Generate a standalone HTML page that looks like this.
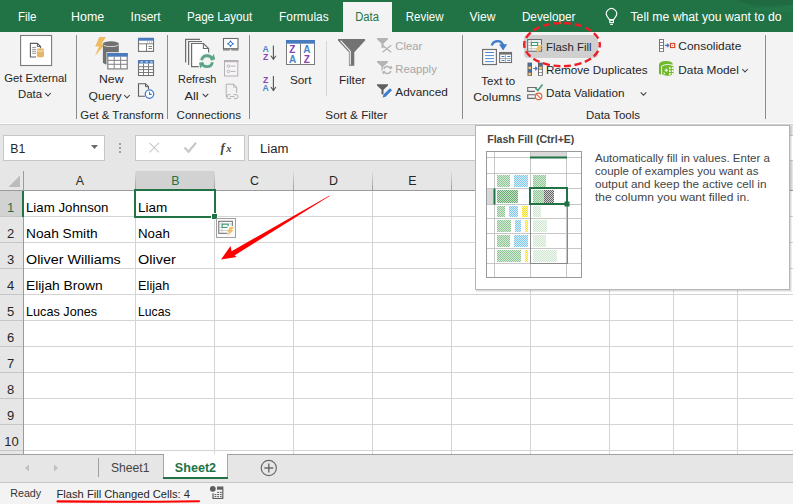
<!DOCTYPE html>
<html><head><meta charset="utf-8"><style>
html,body{margin:0;padding:0;width:793px;height:504px;overflow:hidden;background:#fff}
svg{display:block;font-family:"Liberation Sans", sans-serif}
</style></head><body>
<svg width="793" height="504" viewBox="0 0 793 504">
<rect x="0" y="0" width="793" height="504" fill="#ffffff" />
<rect x="0" y="0" width="793" height="32" fill="#217346" />
<path d="M738,0 C745,6 765,7 793,4 L793,0 Z" fill="#1f6a40" stroke="none" stroke-width="1" />
<path d="M744,7.5 C765,8.5 780,7 793,5 L793,13 C780,12 760,12 744,7.5 Z" fill="#257a4b" stroke="none" stroke-width="1" opacity="0.6"/>
<rect x="343" y="2" width="49" height="30" fill="#f3f3f3" />
<rect x="0" y="32" width="793" height="91" fill="#f3f3f3" />
<rect x="0" y="124" width="793" height="1" fill="#cfcfcf" />
<rect x="0" y="125" width="793" height="65" fill="#e6e6e6" />
<text x="17.9" y="21" font-size="12.3" fill="#ffffff" font-weight="normal" textLength="18.6" lengthAdjust="spacingAndGlyphs" >File</text>
<text x="71.1" y="21" font-size="12.3" fill="#ffffff" font-weight="normal" textLength="33.2" lengthAdjust="spacingAndGlyphs" >Home</text>
<text x="130.6" y="21" font-size="12.3" fill="#ffffff" font-weight="normal" textLength="30.1" lengthAdjust="spacingAndGlyphs" >Insert</text>
<text x="186.9" y="21" font-size="12.3" fill="#ffffff" font-weight="normal" textLength="65.4" lengthAdjust="spacingAndGlyphs" >Page Layout</text>
<text x="279.0" y="21" font-size="12.3" fill="#ffffff" font-weight="normal" textLength="49.6" lengthAdjust="spacingAndGlyphs" >Formulas</text>
<text x="405.8" y="21" font-size="12.3" fill="#ffffff" font-weight="normal" textLength="37.7" lengthAdjust="spacingAndGlyphs" >Review</text>
<text x="469.5" y="21" font-size="12.3" fill="#ffffff" font-weight="normal" textLength="25.9" lengthAdjust="spacingAndGlyphs" >View</text>
<text x="521.9" y="21" font-size="12.3" fill="#ffffff" font-weight="normal" textLength="53.5" lengthAdjust="spacingAndGlyphs" >Developer</text>
<text x="630.5" y="21" font-size="12.3" fill="#ffffff" font-weight="normal" textLength="151" lengthAdjust="spacingAndGlyphs" >Tell me what you want to do</text>
<text x="355.2" y="21" font-size="12.3" fill="#217346" font-weight="normal" textLength="23.7" lengthAdjust="spacingAndGlyphs" >Data</text>
<path d="M609.4,19.6 L607.3,16.6 A5.1,5.1 0 1 1 615.7,16.6 L613.6,19.6 Z" fill="none" stroke="#ffffff" stroke-width="1.1" />
<rect x="609.8" y="20.3" width="3.6" height="2.3" fill="none" stroke="#ffffff" stroke-width="1.1"/>
<line x1="610.2" y1="24.4" x2="612.9" y2="24.4" stroke="#ffffff" stroke-width="1.1" />
<line x1="76.5" y1="35" x2="76.5" y2="119" stroke="#8c8c8c" stroke-width="1" />
<line x1="167.5" y1="35" x2="167.5" y2="119" stroke="#8c8c8c" stroke-width="1" />
<line x1="249.5" y1="35" x2="249.5" y2="119" stroke="#8c8c8c" stroke-width="1" />
<line x1="462.5" y1="35" x2="462.5" y2="119" stroke="#8c8c8c" stroke-width="1" />
<line x1="765.5" y1="35" x2="765.5" y2="119" stroke="#8c8c8c" stroke-width="1" />
<line x1="326.5" y1="41" x2="326.5" y2="96" stroke="#d4d4d4" stroke-width="1" />
<rect x="20.6" y="35.5" width="31" height="30" fill="#ffffff" stroke="#7a7a7a" stroke-width="1.1"/>
<path d="M36,57 H30.4 V43.4 H37.4 L40.6,46.6 V48.2" fill="#ffffff" stroke="#5f5f5f" stroke-width="1.1" />
<path d="M37.4,43.4 V46.6 H40.6" fill="none" stroke="#5f5f5f" stroke-width="1" />
<line x1="32.1" y1="47.4" x2="36.1" y2="47.4" stroke="#8a8a8a" stroke-width="0.9" />
<line x1="32.1" y1="49.4" x2="36.1" y2="49.4" stroke="#8a8a8a" stroke-width="0.9" />
<line x1="32.1" y1="51.3" x2="36.1" y2="51.3" stroke="#8a8a8a" stroke-width="0.9" />
<line x1="32.1" y1="53.3" x2="36.1" y2="53.3" stroke="#8a8a8a" stroke-width="0.9" />
<path d="M36.9,49.6 A3.55,1.4 0 0 1 44,49.6 V56 A3.55,1.4 0 0 1 36.9,56 Z" fill="#e3b76a" stroke="none" stroke-width="1" />
<path d="M37.2,50.3 A3.3,1.2 0 0 0 43.7,50.3" fill="none" stroke="#ffffff" stroke-width="0.7" />
<text x="4.2" y="81.9" font-size="11.6" fill="#262626" font-weight="normal" textLength="62.5" lengthAdjust="spacingAndGlyphs" >Get External</text>
<text x="18" y="97.5" font-size="11.6" fill="#262626" font-weight="normal" textLength="24" lengthAdjust="spacingAndGlyphs" >Data</text>
<path d="M45.2,93.0 L48,95.9 L50.8,93.0" fill="none" stroke="#444" stroke-width="1.05" />
<path d="M99.2,37 L106,37 L101.3,44.3 L105,44.3 L95,56 L99,46.6 L95.2,46.6 Z" fill="#eebc5f" stroke="none" stroke-width="1" />
<path d="M102.9,43.8 A7.95,2.6 0 0 1 118.8,43.8 V62.3 A7.95,2.6 0 0 1 102.9,62.3 Z" fill="#707070" stroke="none" stroke-width="1" />
<path d="M103.2,44.6 A7.7,2.2 0 0 0 118.5,44.6" fill="none" stroke="#f3f3f3" stroke-width="0.8" />
<rect x="106.5" y="52.2" width="22" height="18" fill="#f3f3f3" />
<rect x="107.8" y="53.6" width="19.4" height="15.3" fill="#ffffff" stroke="#777777" stroke-width="1.1"/>
<rect x="107.3" y="53.1" width="20.4" height="3.6" fill="#4a7bbf" />
<line x1="114.2" y1="56.7" x2="114.2" y2="68.8" stroke="#8a8a8a" stroke-width="1.1" />
<line x1="120.6" y1="56.7" x2="120.6" y2="68.8" stroke="#8a8a8a" stroke-width="1.1" />
<line x1="108" y1="60.4" x2="127" y2="60.4" stroke="#8a8a8a" stroke-width="1.1" />
<line x1="108" y1="64.3" x2="127" y2="64.3" stroke="#8a8a8a" stroke-width="1.1" />
<text x="99" y="83.3" font-size="11.6" fill="#262626" font-weight="normal" textLength="24.5" lengthAdjust="spacingAndGlyphs" >New</text>
<text x="88.5" y="99.7" font-size="11.6" fill="#262626" font-weight="normal" textLength="33" lengthAdjust="spacingAndGlyphs" >Query</text>
<path d="M124.2,95.0 L127,97.9 L129.8,95.0" fill="none" stroke="#444" stroke-width="1.05" />
<rect x="138.5" y="38.4" width="15" height="13" fill="#ffffff" stroke="#707070" stroke-width="1.1"/>
<rect x="138" y="37.9" width="16" height="2.8" fill="#4a7bbf" />
<line x1="138.5" y1="43.8" x2="153.5" y2="43.8" stroke="#707070" stroke-width="0.9" />
<rect x="147" y="41.5" width="1" height="1" fill="#9a9a9a" />
<rect x="149" y="41.5" width="1" height="1" fill="#9a9a9a" />
<rect x="151" y="41.5" width="1" height="1" fill="#9a9a9a" />
<line x1="146.5" y1="43.8" x2="146.5" y2="51.5" stroke="#707070" stroke-width="0.9" />
<line x1="148.5" y1="46.5" x2="152" y2="46.5" stroke="#707070" stroke-width="0.9" />
<line x1="148.5" y1="48.5" x2="152" y2="48.5" stroke="#707070" stroke-width="0.9" />
<rect x="138.5" y="60.7" width="15" height="14.8" fill="#ffffff" stroke="#707070" stroke-width="1.1"/>
<rect x="138" y="60.2" width="16" height="3.3" fill="#4a7bbf" />
<rect x="140.5" y="61.5" width="2.5" height="0.9" fill="#ffffff" />
<rect x="145.3" y="61.5" width="2.5" height="0.9" fill="#ffffff" />
<rect x="150.1" y="61.5" width="2.5" height="0.9" fill="#ffffff" />
<line x1="143.5" y1="63.5" x2="143.5" y2="75.5" stroke="#707070" stroke-width="0.9" />
<line x1="148.5" y1="63.5" x2="148.5" y2="75.5" stroke="#707070" stroke-width="0.9" />
<line x1="139" y1="66.7" x2="153.5" y2="66.7" stroke="#707070" stroke-width="0.9" />
<line x1="139" y1="69.6" x2="153.5" y2="69.6" stroke="#707070" stroke-width="0.9" />
<line x1="139" y1="72.5" x2="153.5" y2="72.5" stroke="#707070" stroke-width="0.9" />
<path d="M145,96.3 H138.5 V83.7 H145.5 L148.5,86.7 V89" fill="none" stroke="#5f5f5f" stroke-width="1.1" />
<path d="M145.5,83.7 V86.7 H148.5" fill="none" stroke="#5f5f5f" stroke-width="1" />
<circle cx="149.5" cy="94.1" r="4.2" fill="#ffffff" stroke="#3e7fd0" stroke-width="1.3"/>
<path d="M149.5,91.8 V94.4 H151.8" fill="none" stroke="#3e7fd0" stroke-width="1.1" />
<text x="80.3" y="118.5" font-size="11.6" fill="#262626" font-weight="normal" textLength="83.5" lengthAdjust="spacingAndGlyphs" >Get &amp; Transform</text>
<path d="M185.6,62.6 V39.4 H200" fill="none" stroke="#6d6d6d" stroke-width="1.2" />
<path d="M188.6,65 V41.5 H202" fill="none" stroke="#6d6d6d" stroke-width="1.2" />
<path d="M191.6,66.6 V43.5 H203.4 L208.6,48.5 V60 H199 V66.6 Z" fill="#ffffff" stroke="none" stroke-width="1" />
<path d="M198.8,66.6 H191.6 V43.5 H203.4 L208.6,48.6 V52.5" fill="none" stroke="#6d6d6d" stroke-width="1.2" />
<path d="M203.4,43.5 V48.5 H208.6" fill="none" stroke="#6d6d6d" stroke-width="1.1" />
<circle cx="207" cy="61.2" r="8.3" fill="#f3f3f3"/>
<path d="M201.6,60.2 A5.5,5.5 0 0 1 212.4,60.2" fill="none" stroke="#5da587" stroke-width="2.8" />
<path d="M210,59.6 L215.2,59.6 L213.8,54 Z" fill="#5da587" stroke="none" stroke-width="1" />
<path d="M212.4,62.2 A5.5,5.5 0 0 1 201.6,62.2" fill="none" stroke="#5da587" stroke-width="2.8" />
<path d="M199,62.8 L204.2,62.8 L200.2,68.5 Z" fill="#5da587" stroke="none" stroke-width="1" />
<text x="178" y="83.4" font-size="11.6" fill="#262626" font-weight="normal" textLength="38.5" lengthAdjust="spacingAndGlyphs" >Refresh</text>
<text x="184.4" y="99.7" font-size="11.6" fill="#262626" font-weight="normal" textLength="14.2" lengthAdjust="spacingAndGlyphs" >All</text>
<path d="M202.7,93.8 L205.5,96.7 L208.3,93.8" fill="none" stroke="#444" stroke-width="1.05" />
<rect x="223.5" y="38.5" width="14.5" height="10.2" fill="#ffffff" stroke="#6a6a6a" stroke-width="1.1"/>
<line x1="223" y1="49.9" x2="229.8" y2="49.9" stroke="#6a6a6a" stroke-width="1.1" />
<line x1="231.2" y1="49.9" x2="238.5" y2="49.9" stroke="#6a6a6a" stroke-width="1.1" />
<circle cx="230.5" cy="41.400000000000006" r="0.9" fill="#2f6fc5"/>
<circle cx="232.8" cy="43.7" r="0.9" fill="#2f6fc5"/>
<circle cx="230.5" cy="46.0" r="0.9" fill="#2f6fc5"/>
<circle cx="228.2" cy="43.7" r="0.9" fill="#2f6fc5"/>
<path d="M230.5,41.4 L232.8,43.7 L230.5,46 L228.2,43.7 Z" fill="none" stroke="#2f6fc5" stroke-width="1" />
<rect x="224.5" y="60.5" width="13.3" height="15.5" fill="#f6f4f6" stroke="#b4b0b4" stroke-width="1"/>
<rect x="224" y="60" width="14.3" height="2.2" fill="#b4b0b4" />
<circle cx="228.4" cy="66.1" r="1.3" fill="none" stroke="#b4b0b4" stroke-width="0.9"/><circle cx="228.4" cy="71.4" r="1.3" fill="none" stroke="#b4b0b4" stroke-width="0.9"/>
<line x1="230.5" y1="66.1" x2="235.5" y2="66.1" stroke="#b4b0b4" stroke-width="1" />
<line x1="230.5" y1="71.4" x2="235.5" y2="71.4" stroke="#b4b0b4" stroke-width="1" />
<path d="M228,96.3 H226.2 V84.2 H233.7 L236.7,87.2 V93" fill="none" stroke="#b4b0b4" stroke-width="1" />
<path d="M233.7,84.2 V87.2 H236.7" fill="none" stroke="#b4b0b4" stroke-width="0.9" />
<path d="M230.5,94.6 H228.5 A2,2 0 0 0 228.5,98.6 H231 M233.5,94.6 H236 A2,2 0 0 1 236,98.6 H234 M229.8,96.6 H234.7" fill="none" stroke="#b4b0b4" stroke-width="1" />
<text x="176.5" y="118.7" font-size="11.6" fill="#262626" font-weight="normal" textLength="64.5" lengthAdjust="spacingAndGlyphs" >Connections</text>
<text x="262.6" y="51.8" font-size="8.6" fill="#4a86c8" font-weight="bold" font-family="Liberation Sans">A</text>
<text x="262.9" y="59.7" font-size="8.6" fill="#8a44ad" font-weight="bold" font-family="Liberation Sans">Z</text>
<path d="M273.4,45.5 V59 M270.9,55.8 L273.4,59.3 L275.9,55.8" fill="none" stroke="#555555" stroke-width="1.1" />
<text x="262.9" y="82.7" font-size="8.6" fill="#8a44ad" font-weight="bold" font-family="Liberation Sans">Z</text>
<text x="262.6" y="90.9" font-size="8.6" fill="#4a86c8" font-weight="bold" font-family="Liberation Sans">A</text>
<path d="M273.4,76 V90.2 M270.9,87 L273.4,90.5 L275.9,87" fill="none" stroke="#555555" stroke-width="1.1" />
<rect x="286.5" y="40.5" width="28" height="24" fill="#ffffff" stroke="#7a7a7a" stroke-width="1"/>
<rect x="286" y="40" width="29" height="3.7" fill="#4a7bbf" />
<line x1="300.5" y1="43.5" x2="300.5" y2="64.5" stroke="#7a7a7a" stroke-width="1" />
<text x="289.2" y="52.7" font-size="10" fill="#8a44ad" font-weight="bold" font-family="Liberation Sans">Z</text>
<text x="289" y="63.1" font-size="10" fill="#4a86c8" font-weight="bold" font-family="Liberation Sans">A</text>
<text x="303.3" y="52.7" font-size="10" fill="#4a86c8" font-weight="bold" font-family="Liberation Sans">A</text>
<text x="303.8" y="63.1" font-size="10" fill="#8a44ad" font-weight="bold" font-family="Liberation Sans">Z</text>
<text x="290" y="84" font-size="11.6" fill="#262626" font-weight="normal" textLength="21.5" lengthAdjust="spacingAndGlyphs" >Sort</text>
<path d="M338,39 H365.1 V40.5 L354.3,52.2 V65.7 H348.9 V52.2 L338,40.5 Z" fill="#737373" stroke="none" stroke-width="1" />
<path d="M340.6,40.7 L350.2,51.2 V64.8" fill="none" stroke="#ffffff" stroke-width="1.1" stroke-linejoin="miter"/>
<text x="339" y="84" font-size="11.6" fill="#262626" font-weight="normal" textLength="26.5" lengthAdjust="spacingAndGlyphs" >Filter</text>
<path d="M377,38 H388 V39.2 L383.5,43.5 V48 H381.5 V43.5 L377,39.2 Z" fill="#b3b3b3" stroke="none" stroke-width="1" />
<path d="M382.5,45.2 L391.2,52.2 M391.2,45.2 L382.5,52.2" fill="none" stroke="#b3b3b3" stroke-width="1.3" />
<path d="M377,61 H388 V62.2 L383.5,66.5 V71 H381.5 V66.5 L377,62.2 Z" fill="#b3b3b3" stroke="none" stroke-width="1" />
<circle cx="387.3" cy="70" r="5" fill="#f3f3f3"/>
<path d="M383.8,69.2 A3.6,3.6 0 0 1 390.8,69.2" fill="none" stroke="#b3b3b3" stroke-width="1.4" />
<path d="M389.2,68.6 L392.6,68.6 L391.4,65.5 Z" fill="#b3b3b3" stroke="none" stroke-width="1" />
<path d="M390.8,70.8 A3.6,3.6 0 0 1 383.8,70.8" fill="none" stroke="#b3b3b3" stroke-width="1.4" />
<path d="M382,71.4 L385.4,71.4 L383.2,74.5 Z" fill="#b3b3b3" stroke="none" stroke-width="1" />
<text x="395.3" y="49.8" font-size="11.6" fill="#a6a6a6" font-weight="normal" textLength="27" lengthAdjust="spacingAndGlyphs" >Clear</text>
<text x="395.3" y="73" font-size="11.6" fill="#a6a6a6" font-weight="normal" textLength="41.5" lengthAdjust="spacingAndGlyphs" >Reapply</text>
<path d="M377,84.2 H388 V85.4 L383.5,89.7 V94.2 H381.5 V89.7 L377,85.4 Z" fill="#5f5f5f" stroke="none" stroke-width="1" />
<path d="M382.6,97.6 L383.5,94.6 L390,88.3 L392,90.3 L385.6,96.7 Z" fill="#3b7ccf" stroke="none" stroke-width="1" />
<text x="395.3" y="95.6" font-size="11.6" fill="#262626" font-weight="normal" textLength="52.5" lengthAdjust="spacingAndGlyphs" >Advanced</text>
<text x="325.3" y="119" font-size="11.6" fill="#262626" font-weight="normal" textLength="62" lengthAdjust="spacingAndGlyphs" >Sort &amp; Filter</text>
<path d="M491.8,45.6 C493,40.5 501,39 503.2,45.5" fill="none" stroke="#3d7cc9" stroke-width="2.4" />
<path d="M499,44.2 L507.2,44.2 L503.1,50.4 Z" fill="#3d7cc9" stroke="none" stroke-width="1" />
<rect x="482.6" y="49.5" width="13.8" height="15" fill="#ffffff" stroke="#707070" stroke-width="1.2"/>
<line x1="485.1" y1="52.5" x2="494.1" y2="52.5" stroke="#3d7cc9" stroke-width="0.9" />
<line x1="485.1" y1="55.6" x2="494.1" y2="55.6" stroke="#3d7cc9" stroke-width="0.9" />
<line x1="485.1" y1="58.6" x2="494.1" y2="58.6" stroke="#3d7cc9" stroke-width="0.9" />
<line x1="485.1" y1="61.6" x2="494.1" y2="61.6" stroke="#3d7cc9" stroke-width="0.9" />
<rect x="499.6" y="52.5" width="11.9" height="10" fill="#ffffff" stroke="#707070" stroke-width="1.1"/>
<rect x="499.2" y="52" width="12.6" height="2.6" fill="#707070" />
<line x1="505.5" y1="54.5" x2="505.5" y2="62.5" stroke="#9a9a9a" stroke-width="0.8" />
<line x1="500" y1="58.5" x2="511.5" y2="58.5" stroke="#9a9a9a" stroke-width="0.8" />
<line x1="501.5" y1="56.5" x2="504.5" y2="56.5" stroke="#3d7cc9" stroke-width="1" />
<line x1="501.5" y1="60.4" x2="504.5" y2="60.4" stroke="#3d7cc9" stroke-width="1" />
<line x1="507.3" y1="56.5" x2="510.3" y2="56.5" stroke="#3d7cc9" stroke-width="1" />
<line x1="507.3" y1="60.4" x2="510.3" y2="60.4" stroke="#3d7cc9" stroke-width="1" />
<text x="481.3" y="84.6" font-size="11.6" fill="#262626" font-weight="normal" textLength="33.8" lengthAdjust="spacingAndGlyphs" >Text to</text>
<text x="473.2" y="100.7" font-size="11.6" fill="#262626" font-weight="normal" textLength="48" lengthAdjust="spacingAndGlyphs" >Columns</text>
<rect x="524" y="35" width="74" height="23" fill="#d0d0d0" rx="4"/>
<rect x="527.7" y="39.6" width="13.8" height="11.6" fill="#ffffff" stroke="#6a6a6a" stroke-width="1.1"/>
<line x1="528.3" y1="42.3" x2="541" y2="42.3" stroke="#bdbdbd" stroke-width="0.9" />
<line x1="528.3" y1="45.5" x2="541" y2="45.5" stroke="#bdbdbd" stroke-width="0.9" />
<line x1="528.3" y1="48.7" x2="541" y2="48.7" stroke="#bdbdbd" stroke-width="0.9" />
<line x1="531.2" y1="40" x2="531.2" y2="51" stroke="#bdbdbd" stroke-width="0.9" />
<rect x="531.4" y="42.5" width="6.2" height="3" fill="#ffffff" stroke="#3c9a73" stroke-width="1.1"/>
<path d="M538.5,45 L542.7,45 L540.2,48.3 L542.2,48.3 L536,53.9 L537.6,49.8 L535.6,49.8 Z" fill="#eec16a" stroke="none" stroke-width="1" />
<text x="546" y="50.7" font-size="11.6" fill="#262626" font-weight="normal" textLength="45.5" lengthAdjust="spacingAndGlyphs" >Flash Fill</text>
<rect x="527.5" y="62.6" width="4.5" height="13.2" fill="#5f5f5f" />
<rect x="528.4" y="63.4" width="2.7" height="2.4" fill="#3d73b8" />
<rect x="528.4" y="66.6" width="2.7" height="2.6" fill="#f2c27a" />
<rect x="528.4" y="69.7" width="2.7" height="2.4" fill="#3d73b8" />
<rect x="528.4" y="72.7" width="2.7" height="2.4" fill="#f2c27a" />
<rect x="538" y="62.6" width="4.8" height="13.2" fill="#5f5f5f" />
<rect x="538.9" y="63.4" width="3" height="2.4" fill="#3d73b8" />
<rect x="538.9" y="66.6" width="3" height="2.6" fill="#f2c27a" />
<rect x="538.9" y="69.7" width="3" height="2.4" fill="#ffffff" />
<rect x="538.9" y="72.7" width="3" height="2.4" fill="#ffffff" />
<path d="M533.2,68.5 H536.8 M535.2,66.8 L537,68.5 L535.2,70.2" fill="none" stroke="#3d7cc9" stroke-width="1.2" />
<text x="546" y="73.6" font-size="11.6" fill="#262626" font-weight="normal" textLength="101.5" lengthAdjust="spacingAndGlyphs" >Remove Duplicates</text>
<path d="M536.8,87.5 H527.7 V91.4 H535" fill="none" stroke="#6a6a6a" stroke-width="1.1" />
<path d="M535,94.7 H527.7 V98.4 H535" fill="none" stroke="#6a6a6a" stroke-width="1.1" />
<path d="M535.3,87.9 L537.9,90.5 L542.5,84.6" fill="none" stroke="#4a9e7e" stroke-width="1.7" />
<circle cx="538.6" cy="96.4" r="3.2" fill="#ffffff" stroke="#e0623d" stroke-width="1.2"/>
<line x1="536.4" y1="94.2" x2="540.8" y2="98.6" stroke="#e0623d" stroke-width="1.2" />
<text x="546" y="96.9" font-size="11.6" fill="#262626" font-weight="normal" textLength="78.5" lengthAdjust="spacingAndGlyphs" >Data Validation</text>
<path d="M640.7,92.3 L643.5,95.2 L646.3,92.3" fill="none" stroke="#444" stroke-width="1.05" />
<text x="586" y="119.2" font-size="11.6" fill="#262626" font-weight="normal" textLength="54" lengthAdjust="spacingAndGlyphs" >Data Tools</text>
<rect x="659" y="39.1" width="4.9" height="12.8" fill="#6a6a6a" />
<rect x="659.9" y="40" width="3.1" height="2.2" fill="#ffffff" />
<rect x="659.9" y="43" width="3.1" height="2.2" fill="#ffffff" />
<rect x="659.9" y="46" width="3.1" height="2.2" fill="#ffffff" />
<rect x="659.9" y="49" width="3.1" height="2.2" fill="#ffffff" />
<path d="M664.8,45.4 H668.6 M667,43.7 L668.8,45.4 L667,47.1" fill="none" stroke="#3d7cc9" stroke-width="1.2" />
<rect x="670.5" y="43.5" width="4.2" height="4" fill="#ffffff" stroke="#d9452b" stroke-width="1.2"/>
<rect x="672.2" y="45.1" width="0.9" height="0.9" fill="#d9452b" />
<text x="678.3" y="50.3" font-size="11.6" fill="#262626" font-weight="normal" textLength="63" lengthAdjust="spacingAndGlyphs" >Consolidate</text>
<path d="M659,73.8 V64.8 Q659,61 666,61 Q672.8,61 672.8,64.6 L661.6,66.2 V75 Z" fill="#70b92d" stroke="none" stroke-width="1" />
<path d="M661.6,66.2 Q667.5,62.6 674,66.2 V74.6 Q667.5,78 661.6,74.6 Z" fill="#70b92d" stroke="#f3f3f3" stroke-width="1" />
<rect x="669" y="67.3" width="1.6" height="1.8" fill="#ffffff" />
<rect x="669" y="70.2" width="1.6" height="1.8" fill="#ffffff" />
<rect x="669" y="73" width="1.6" height="1.8" fill="#ffffff" />
<rect x="671.8" y="67.3" width="1.6" height="1.8" fill="#ffffff" />
<rect x="671.8" y="70.2" width="1.6" height="1.8" fill="#ffffff" />
<rect x="671.8" y="73" width="1.6" height="1.8" fill="#ffffff" />
<path d="M666.3,68.5 V72 M664.6,70.2 H668 M663.6,72.8 L665,74.2 M665,72.8 L663.6,74.2" fill="none" stroke="#ffffff" stroke-width="0.9" />
<text x="678.3" y="73.7" font-size="11.6" fill="#262626" font-weight="normal" textLength="60.5" lengthAdjust="spacingAndGlyphs" >Data Model</text>
<path d="M742.2,69.0 L745,71.9 L747.8,69.0" fill="none" stroke="#444" stroke-width="1.05" />
<ellipse cx="562" cy="44.6" rx="37.8" ry="21.6" fill="none" stroke="#ee1c25" stroke-width="2.4" stroke-dasharray="7 3.6" stroke-dashoffset="4"/>
<rect x="3.5" y="135.5" width="101" height="25" fill="#ffffff" stroke="#c6c6c6" stroke-width="1"/>
<text x="10.3" y="153" font-size="12.3" fill="#262626" font-weight="normal" textLength="15" lengthAdjust="spacingAndGlyphs" >B1</text>
<path d="M91,145 h7 l-3.5,4 z" fill="#6a6a6a" stroke="none" stroke-width="1" />
<rect x="119" y="143" width="2" height="2" fill="#a0a0a0" />
<rect x="119" y="147" width="2" height="2" fill="#a0a0a0" />
<rect x="119" y="151" width="2" height="2" fill="#a0a0a0" />
<rect x="135.5" y="135.5" width="109" height="25" fill="#ffffff" stroke="#c6c6c6" stroke-width="1"/>
<path d="M149.5,142.8 l9.5,9.5 M159,142.8 l-9.5,9.5" fill="none" stroke="#c8c8c8" stroke-width="1.1" />
<path d="M184.5,147.5 l4,4.3 l7.5,-9" fill="none" stroke="#c8c8c8" stroke-width="2.2" />
<text x="220.5" y="152.2" font-size="13" fill="#444444" font-weight="bold" font-style="italic" font-family="Liberation Serif">f</text>
<text x="226.3" y="151.5" font-size="10.5" fill="#444444" font-weight="bold" font-style="italic" font-family="Liberation Serif">x</text>
<rect x="248.5" y="135.5" width="560" height="25" fill="#ffffff" stroke="#c6c6c6" stroke-width="1"/>
<text x="260" y="153" font-size="12.3" fill="#262626" font-weight="normal" textLength="28.5" lengthAdjust="spacingAndGlyphs" >Liam</text>
<rect x="23" y="191" width="770" height="263" fill="#ffffff" />
<rect x="0" y="191" width="23" height="263" fill="#e6e6e6" />
<rect x="0" y="191" width="23" height="25" fill="#d2d2d2" />
<rect x="135" y="171" width="79" height="19" fill="#d2d2d2" />
<line x1="135.5" y1="191" x2="135.5" y2="454" stroke="#d4d4d4" stroke-width="1" />
<line x1="214.5" y1="191" x2="214.5" y2="454" stroke="#d4d4d4" stroke-width="1" />
<line x1="293.5" y1="191" x2="293.5" y2="454" stroke="#d4d4d4" stroke-width="1" />
<line x1="372.5" y1="191" x2="372.5" y2="454" stroke="#d4d4d4" stroke-width="1" />
<line x1="451.5" y1="191" x2="451.5" y2="454" stroke="#d4d4d4" stroke-width="1" />
<line x1="530.5" y1="191" x2="530.5" y2="454" stroke="#d4d4d4" stroke-width="1" />
<line x1="609.5" y1="191" x2="609.5" y2="454" stroke="#d4d4d4" stroke-width="1" />
<line x1="673.5" y1="191" x2="673.5" y2="454" stroke="#d4d4d4" stroke-width="1" />
<line x1="737.5" y1="191" x2="737.5" y2="454" stroke="#d4d4d4" stroke-width="1" />
<line x1="801.5" y1="191" x2="801.5" y2="454" stroke="#d4d4d4" stroke-width="1" />
<line x1="23" y1="216.5" x2="793" y2="216.5" stroke="#d4d4d4" stroke-width="1" />
<line x1="23" y1="242.5" x2="793" y2="242.5" stroke="#d4d4d4" stroke-width="1" />
<line x1="23" y1="268.5" x2="793" y2="268.5" stroke="#d4d4d4" stroke-width="1" />
<line x1="23" y1="294.5" x2="793" y2="294.5" stroke="#d4d4d4" stroke-width="1" />
<line x1="23" y1="320.5" x2="793" y2="320.5" stroke="#d4d4d4" stroke-width="1" />
<line x1="23" y1="346.5" x2="793" y2="346.5" stroke="#d4d4d4" stroke-width="1" />
<line x1="23" y1="372.5" x2="793" y2="372.5" stroke="#d4d4d4" stroke-width="1" />
<line x1="23" y1="398.5" x2="793" y2="398.5" stroke="#d4d4d4" stroke-width="1" />
<line x1="23" y1="424.5" x2="793" y2="424.5" stroke="#d4d4d4" stroke-width="1" />
<line x1="23" y1="450.5" x2="793" y2="450.5" stroke="#d4d4d4" stroke-width="1" />
<line x1="23" y1="476.5" x2="793" y2="476.5" stroke="#d4d4d4" stroke-width="1" />
<line x1="0" y1="216.5" x2="23" y2="216.5" stroke="#c6c6c6" stroke-width="1" />
<line x1="0" y1="242.5" x2="23" y2="242.5" stroke="#c6c6c6" stroke-width="1" />
<line x1="0" y1="268.5" x2="23" y2="268.5" stroke="#c6c6c6" stroke-width="1" />
<line x1="0" y1="294.5" x2="23" y2="294.5" stroke="#c6c6c6" stroke-width="1" />
<line x1="0" y1="320.5" x2="23" y2="320.5" stroke="#c6c6c6" stroke-width="1" />
<line x1="0" y1="346.5" x2="23" y2="346.5" stroke="#c6c6c6" stroke-width="1" />
<line x1="0" y1="372.5" x2="23" y2="372.5" stroke="#c6c6c6" stroke-width="1" />
<line x1="0" y1="398.5" x2="23" y2="398.5" stroke="#c6c6c6" stroke-width="1" />
<line x1="0" y1="424.5" x2="23" y2="424.5" stroke="#c6c6c6" stroke-width="1" />
<line x1="0" y1="450.5" x2="23" y2="450.5" stroke="#c6c6c6" stroke-width="1" />
<line x1="0" y1="476.5" x2="23" y2="476.5" stroke="#c6c6c6" stroke-width="1" />
<line x1="23.5" y1="171" x2="23.5" y2="454" stroke="#9b9b9b" stroke-width="1" />
<defs><linearGradient id="hs" x1="0" y1="0" x2="0" y2="1"><stop offset="0" stop-color="#e0e0e0"/><stop offset="1" stop-color="#9b9b9b"/></linearGradient></defs>
<rect x="135" y="171" width="1" height="19" fill="url(#hs)" />
<rect x="214" y="171" width="1" height="19" fill="url(#hs)" />
<rect x="293" y="171" width="1" height="19" fill="url(#hs)" />
<rect x="372" y="171" width="1" height="19" fill="url(#hs)" />
<rect x="451" y="171" width="1" height="19" fill="url(#hs)" />
<rect x="530" y="171" width="1" height="19" fill="url(#hs)" />
<rect x="609" y="171" width="1" height="19" fill="url(#hs)" />
<rect x="673" y="171" width="1" height="19" fill="url(#hs)" />
<rect x="737" y="171" width="1" height="19" fill="url(#hs)" />
<rect x="801" y="171" width="1" height="19" fill="url(#hs)" />
<line x1="0" y1="190.5" x2="793" y2="190.5" stroke="#9b9b9b" stroke-width="1" />
<path d="M20,175.5 L20,187 L8.5,187 Z" fill="#bcbcbc" stroke="none" stroke-width="1" />
<text x="80.0" y="185.2" font-size="12.4" fill="#262626" font-weight="normal" text-anchor="middle">A</text>
<text x="175.5" y="185.2" font-size="12.4" fill="#217346" font-weight="normal" text-anchor="middle">B</text>
<text x="254.5" y="185.2" font-size="12.4" fill="#262626" font-weight="normal" text-anchor="middle">C</text>
<text x="333.5" y="185.2" font-size="12.4" fill="#262626" font-weight="normal" text-anchor="middle">D</text>
<text x="412.5" y="185.2" font-size="12.4" fill="#262626" font-weight="normal" text-anchor="middle">E</text>
<text x="491.5" y="185.2" font-size="12.4" fill="#262626" font-weight="normal" text-anchor="middle">F</text>
<text x="570.5" y="185.2" font-size="12.4" fill="#262626" font-weight="normal" text-anchor="middle">G</text>
<text x="642.0" y="185.2" font-size="12.4" fill="#262626" font-weight="normal" text-anchor="middle">H</text>
<text x="706.0" y="185.2" font-size="12.4" fill="#262626" font-weight="normal" text-anchor="middle">I</text>
<text x="10.6" y="211.8" font-size="13" fill="#217346" font-weight="normal" text-anchor="middle">1</text>
<text x="10.6" y="237.8" font-size="13" fill="#262626" font-weight="normal" text-anchor="middle">2</text>
<text x="10.6" y="263.8" font-size="13" fill="#262626" font-weight="normal" text-anchor="middle">3</text>
<text x="10.6" y="289.8" font-size="13" fill="#262626" font-weight="normal" text-anchor="middle">4</text>
<text x="10.6" y="315.8" font-size="13" fill="#262626" font-weight="normal" text-anchor="middle">5</text>
<text x="10.6" y="341.8" font-size="13" fill="#262626" font-weight="normal" text-anchor="middle">6</text>
<text x="10.6" y="367.8" font-size="13" fill="#262626" font-weight="normal" text-anchor="middle">7</text>
<text x="10.6" y="393.8" font-size="13" fill="#262626" font-weight="normal" text-anchor="middle">8</text>
<text x="10.6" y="419.8" font-size="13" fill="#262626" font-weight="normal" text-anchor="middle">9</text>
<text x="11.6" y="445.8" font-size="13" fill="#262626" font-weight="normal" text-anchor="middle">10</text>
<rect x="22" y="191" width="2" height="26" fill="#217346" />
<text x="26" y="211.9" font-size="12.6" fill="#000000" font-weight="normal" textLength="82.5" lengthAdjust="spacingAndGlyphs" >Liam Johnson</text>
<text x="138" y="211.9" font-size="12.6" fill="#000000" font-weight="normal" textLength="29.3" lengthAdjust="spacingAndGlyphs" >Liam</text>
<text x="26" y="237.9" font-size="12.6" fill="#000000" font-weight="normal" textLength="71.6" lengthAdjust="spacingAndGlyphs" >Noah Smith</text>
<text x="138" y="237.9" font-size="12.6" fill="#000000" font-weight="normal" textLength="31.8" lengthAdjust="spacingAndGlyphs" >Noah</text>
<text x="26" y="263.9" font-size="12.6" fill="#000000" font-weight="normal" textLength="94.8" lengthAdjust="spacingAndGlyphs" >Oliver Williams</text>
<text x="138" y="263.9" font-size="12.6" fill="#000000" font-weight="normal" textLength="37.8" lengthAdjust="spacingAndGlyphs" >Oliver</text>
<text x="26" y="289.9" font-size="12.6" fill="#000000" font-weight="normal" textLength="76.6" lengthAdjust="spacingAndGlyphs" >Elijah Brown</text>
<text x="138" y="289.9" font-size="12.6" fill="#000000" font-weight="normal" textLength="31.3" lengthAdjust="spacingAndGlyphs" >Elijah</text>
<text x="26" y="315.9" font-size="12.6" fill="#000000" font-weight="normal" textLength="71.1" lengthAdjust="spacingAndGlyphs" >Lucas Jones</text>
<text x="138" y="315.9" font-size="12.6" fill="#000000" font-weight="normal" textLength="32.5" lengthAdjust="spacingAndGlyphs" >Lucas</text>
<rect x="135" y="190" width="80" height="27" fill="none" stroke="#217346" stroke-width="2"/>
<rect x="211" y="213" width="7" height="7" fill="#ffffff" />
<rect x="212" y="214" width="5" height="5" fill="#217346" />
<rect x="216.5" y="218.5" width="19" height="19" fill="#fafafa" stroke="#a0a0a0" stroke-width="1"/>
<rect x="218.8" y="221.3" width="13.5" height="12" fill="#ffffff" stroke="#6a6a6a" stroke-width="1"/>
<line x1="219.3" y1="224" x2="231.8" y2="224" stroke="#c6c6c6" stroke-width="0.9" />
<line x1="219.3" y1="227.3" x2="231.8" y2="227.3" stroke="#c6c6c6" stroke-width="0.9" />
<line x1="219.3" y1="230.5" x2="231.8" y2="230.5" stroke="#c6c6c6" stroke-width="0.9" />
<line x1="222" y1="221.5" x2="222" y2="233" stroke="#c6c6c6" stroke-width="0.9" />
<rect x="222.2" y="224.2" width="6" height="3.2" fill="#ffffff" stroke="#3c9a73" stroke-width="1.1"/>
<rect x="227.5" y="226" width="7" height="10" fill="#fafafa" />
<path d="M230,227 L234,227 L231.6,230.3 L233.6,230.3 L227.3,236 L229,231.8 L227,231.8 Z" fill="#eec16a" stroke="none" stroke-width="1" />
<path d="M329.5,195.5 L231.6,251.2 L230.5,246 L221,259.6 L236.8,257.1 L234.4,255.6 L329.7,196 Z" fill="#ff0000" stroke="none" stroke-width="1" />
<rect x="476" y="126" width="316" height="166" fill="#000000" opacity="0.07"/>
<rect x="476" y="126" width="315" height="165" fill="#000000" opacity="0.07"/>
<rect x="475.5" y="125.5" width="314" height="164" fill="#ffffff" stroke="#b5b5b5" stroke-width="1"/>
<text x="487.2" y="142.7" font-size="11" fill="#444444" font-weight="bold" textLength="87.2" lengthAdjust="spacingAndGlyphs" >Flash Fill (Ctrl+E)</text>
<text x="595" y="161.6" font-size="10.6" fill="#444444" font-weight="normal" textLength="175" lengthAdjust="spacingAndGlyphs" >Automatically fill in values. Enter a</text>
<text x="595" y="174.67" font-size="10.6" fill="#444444" font-weight="normal" textLength="163.5" lengthAdjust="spacingAndGlyphs" >couple of examples you want as</text>
<text x="595" y="187.74" font-size="10.6" fill="#444444" font-weight="normal" textLength="171.5" lengthAdjust="spacingAndGlyphs" >output and keep the active cell in</text>
<text x="595" y="200.81" font-size="10.6" fill="#444444" font-weight="normal" textLength="154.5" lengthAdjust="spacingAndGlyphs" >the column you want filled in.</text>
<rect x="486.5" y="151.5" width="95" height="126" fill="#ffffff" stroke="#9a9a9a" stroke-width="1"/>
<rect x="530.5" y="152" width="36" height="5.5" fill="#d9d9d9" />
<line x1="494.5" y1="152" x2="494.5" y2="277" stroke="#c6c6c6" stroke-width="1" />
<line x1="530.5" y1="152" x2="530.5" y2="277" stroke="#c6c6c6" stroke-width="1" />
<line x1="566.5" y1="152" x2="566.5" y2="277" stroke="#c6c6c6" stroke-width="1" />
<line x1="487" y1="157.5" x2="581" y2="157.5" stroke="#c6c6c6" stroke-width="1" />
<line x1="487" y1="173.5" x2="581" y2="173.5" stroke="#c6c6c6" stroke-width="1" />
<line x1="487" y1="188.5" x2="581" y2="188.5" stroke="#c6c6c6" stroke-width="1" />
<line x1="487" y1="204.5" x2="581" y2="204.5" stroke="#c6c6c6" stroke-width="1" />
<line x1="487" y1="218.5" x2="581" y2="218.5" stroke="#c6c6c6" stroke-width="1" />
<line x1="487" y1="233.5" x2="581" y2="233.5" stroke="#c6c6c6" stroke-width="1" />
<line x1="487" y1="248.5" x2="581" y2="248.5" stroke="#c6c6c6" stroke-width="1" />
<line x1="487" y1="263.5" x2="581" y2="263.5" stroke="#c6c6c6" stroke-width="1" />
<line x1="530" y1="157.5" x2="567" y2="157.5" stroke="#217346" stroke-width="2" />
<rect x="487" y="189" width="7" height="15" fill="#d9d9d9" />
<line x1="494.5" y1="188.5" x2="494.5" y2="204.5" stroke="#217346" stroke-width="2" />
<defs><pattern id="pg" width="2" height="2" patternUnits="userSpaceOnUse"><rect width="2" height="2" fill="#d4ebd5"/><rect width="1" height="1" fill="#8fc494"/><rect x="1" y="1" width="1" height="1" fill="#8fc494"/></pattern><pattern id="pb" width="2" height="2" patternUnits="userSpaceOnUse"><rect width="2" height="2" fill="#d7eef9"/><rect width="1" height="1" fill="#7fc7ea"/><rect x="1" y="1" width="1" height="1" fill="#7fc7ea"/></pattern><pattern id="py" width="2" height="2" patternUnits="userSpaceOnUse"><rect width="2" height="2" fill="#fff6b0"/><rect width="1" height="1" fill="#f5e22a"/><rect x="1" y="1" width="1" height="1" fill="#f5e22a"/></pattern><pattern id="pd" width="2" height="2" patternUnits="userSpaceOnUse"><rect width="2" height="2" fill="#c4e0c6"/><rect width="1" height="1" fill="#6aac72"/><rect x="1" y="1" width="1" height="1" fill="#6aac72"/></pattern><pattern id="pk" width="2" height="2" patternUnits="userSpaceOnUse"><rect width="2" height="2" fill="#d0d0d0"/><rect width="1" height="1" fill="#666"/><rect x="1" y="1" width="1" height="1" fill="#666"/></pattern><pattern id="pl" width="2" height="2" patternUnits="userSpaceOnUse"><rect width="2" height="2" fill="#f2f9f2"/><rect width="1" height="1" fill="#cfe6d1"/><rect x="1" y="1" width="1" height="1" fill="#cfe6d1"/></pattern></defs>
<rect x="497" y="175" width="13" height="12" fill="url(#pg)" />
<rect x="514" y="175" width="14" height="12" fill="url(#pb)" />
<rect x="533" y="175" width="13" height="12" fill="url(#pg)" />
<rect x="497" y="190" width="21" height="13" fill="url(#pd)" />
<rect x="533" y="190" width="11" height="13" fill="url(#pg)" />
<rect x="544" y="190" width="10" height="13" fill="url(#pk)" />
<rect x="497" y="206" width="8" height="11" fill="url(#pg)" />
<rect x="509" y="206" width="9" height="11" fill="url(#pb)" />
<rect x="522" y="206" width="6" height="11" fill="url(#py)" />
<rect x="533" y="206" width="8" height="11" fill="url(#pl)" />
<rect x="497" y="220" width="14" height="12" fill="url(#pg)" />
<rect x="515" y="220" width="6" height="12" fill="url(#pb)" />
<rect x="525" y="220" width="3" height="12" fill="url(#py)" />
<rect x="533" y="220" width="14" height="12" fill="url(#pl)" />
<rect x="497" y="235" width="13" height="12" fill="url(#pg)" />
<rect x="514" y="235" width="14" height="12" fill="url(#pb)" />
<rect x="533" y="235" width="13" height="12" fill="url(#pl)" />
<rect x="497" y="250" width="24" height="12" fill="url(#pg)" />
<rect x="525" y="250" width="3" height="12" fill="url(#py)" />
<rect x="533" y="250" width="24" height="12" fill="url(#pl)" />
<rect x="530.5" y="204.5" width="37" height="59" fill="none" stroke="#8a8a8a" stroke-width="1"/>
<rect x="530" y="188" width="37" height="16" fill="none" stroke="#217346" stroke-width="2"/>
<rect x="564.5" y="201.5" width="5" height="5" fill="#217346" />
<rect x="0" y="454" width="793" height="28" fill="#e6e6e6" />
<line x1="0" y1="454.5" x2="793" y2="454.5" stroke="#9f9f9f" stroke-width="1" />
<path d="M29,464.5 L25,468 L29,471.5 Z" fill="#c0c0c0" stroke="none" stroke-width="1" />
<path d="M54,464.5 L58,468 L54,471.5 Z" fill="#c0c0c0" stroke="none" stroke-width="1" />
<line x1="98.5" y1="458" x2="98.5" y2="477" stroke="#a0a0a0" stroke-width="1" />
<line x1="163.5" y1="455" x2="163.5" y2="478" stroke="#a6a6a6" stroke-width="1" />
<text x="111" y="471.8" font-size="12.3" fill="#444444" font-weight="normal" textLength="38.5" lengthAdjust="spacingAndGlyphs" >Sheet1</text>
<rect x="164" y="454" width="63" height="24" fill="#ffffff" />
<line x1="227.5" y1="455" x2="227.5" y2="478" stroke="#a6a6a6" stroke-width="1" />
<rect x="163" y="477" width="65" height="2" fill="#217346" />
<text x="174.8" y="471.8" font-size="13" fill="#217346" font-weight="bold" textLength="41.3" lengthAdjust="spacingAndGlyphs" >Sheet2</text>
<circle cx="268.8" cy="468" r="7.6" fill="none" stroke="#6a6a6a" stroke-width="1.2"/>
<path d="M264.3,468 h9 M268.8,463.5 v9" fill="none" stroke="#6a6a6a" stroke-width="1.4" />
<rect x="0" y="482" width="793" height="22" fill="#f3f3f3" />
<line x1="0" y1="482.5" x2="793" y2="482.5" stroke="#c6c6c6" stroke-width="1" />
<text x="10.2" y="496.6" font-size="11.6" fill="#333333" font-weight="normal" textLength="31" lengthAdjust="spacingAndGlyphs" >Ready</text>
<text x="56.5" y="497.6" font-size="11.6" fill="#262626" font-weight="normal" textLength="133.5" lengthAdjust="spacingAndGlyphs" >Flash Fill Changed Cells: 4</text>
<path d="M57.5,501.4 Q128,502.2 199,501.2" fill="none" stroke="#ff0000" stroke-width="2.1" stroke-linecap="round"/>
<path d="M213,493.2 V498.5 H222.8 V487.2 H217" fill="none" stroke="#5f5f5f" stroke-width="1.2" />
<rect x="217" y="487.1" width="5.8" height="2.6" fill="#5f5f5f" />
<circle cx="212.8" cy="488.8" r="2.9" fill="#5f5f5f"/>
<rect x="217.2" y="491.9" width="1.8" height="1.1" fill="#5f5f5f" />
<rect x="219.9" y="491.9" width="1.8" height="1.1" fill="#5f5f5f" />
<rect x="214.5" y="494.0" width="1.8" height="1.1" fill="#5f5f5f" />
<rect x="217.2" y="494.0" width="1.8" height="1.1" fill="#5f5f5f" />
<rect x="219.9" y="494.0" width="1.8" height="1.1" fill="#5f5f5f" />
<rect x="214.5" y="496.1" width="1.8" height="1.1" fill="#5f5f5f" />
<rect x="217.2" y="496.1" width="1.8" height="1.1" fill="#5f5f5f" />
<rect x="219.9" y="496.1" width="1.8" height="1.1" fill="#5f5f5f" />
</svg></body></html>
